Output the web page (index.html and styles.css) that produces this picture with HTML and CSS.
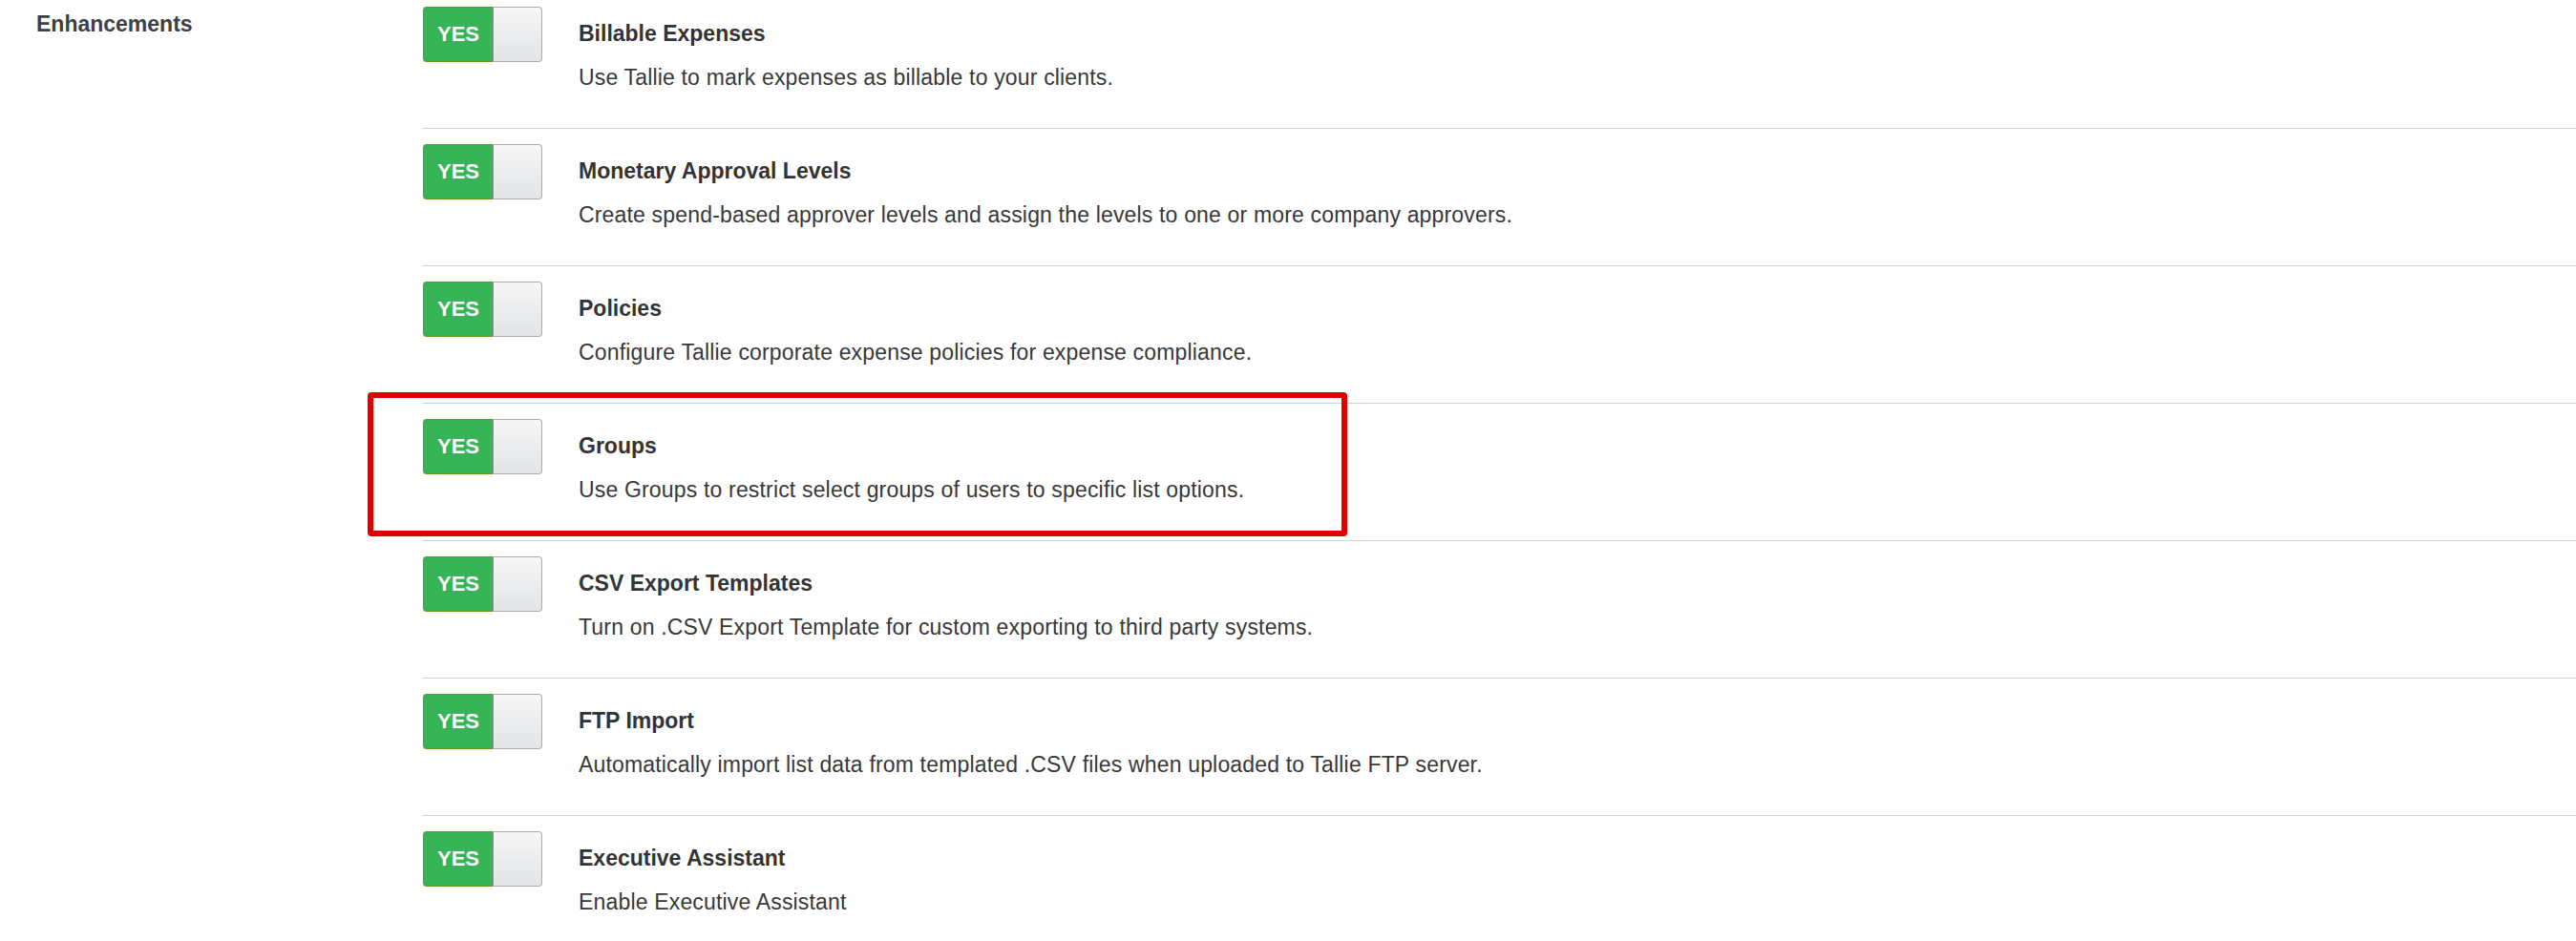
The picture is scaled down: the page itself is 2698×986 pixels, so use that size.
FILE: index.html
```html
<!DOCTYPE html>
<html lang="en">
<head>
  <meta charset="UTF-8" />
  <title>Company Settings - Enhancements</title>
  <link rel="stylesheet" href="styles.css">
</head>
<body>
  <div class="settings">
    <div class="settings-label">Enhancements</div>
    <div class="features">
      <div class="feature">
        <span class="switch"><span class="switch-on">YES</span><span class="switch-knob"></span></span>
        <div class="feature-text">
          <div class="feature-title">Billable Expenses</div>
          <div class="feature-desc">Use Tallie to mark expenses as billable to your clients.</div>
        </div>
      </div>
      <div class="feature">
        <span class="switch"><span class="switch-on">YES</span><span class="switch-knob"></span></span>
        <div class="feature-text">
          <div class="feature-title">Monetary Approval Levels</div>
          <div class="feature-desc">Create spend-based approver levels and assign the levels to one or more company approvers.</div>
        </div>
      </div>
      <div class="feature">
        <span class="switch"><span class="switch-on">YES</span><span class="switch-knob"></span></span>
        <div class="feature-text">
          <div class="feature-title">Policies</div>
          <div class="feature-desc">Configure Tallie corporate expense policies for expense compliance.</div>
        </div>
      </div>
      <div class="feature highlight">
        <span class="switch"><span class="switch-on">YES</span><span class="switch-knob"></span></span>
        <div class="feature-text">
          <div class="feature-title">Groups</div>
          <div class="feature-desc">Use Groups to restrict select groups of users to specific list options.</div>
        </div>
      </div>
      <div class="feature">
        <span class="switch"><span class="switch-on">YES</span><span class="switch-knob"></span></span>
        <div class="feature-text">
          <div class="feature-title">CSV Export Templates</div>
          <div class="feature-desc">Turn on .CSV Export Template for custom exporting to third party systems.</div>
        </div>
      </div>
      <div class="feature">
        <span class="switch"><span class="switch-on">YES</span><span class="switch-knob"></span></span>
        <div class="feature-text">
          <div class="feature-title">FTP Import</div>
          <div class="feature-desc">Automatically import list data from templated .CSV files when uploaded to Tallie FTP server.</div>
        </div>
      </div>
      <div class="feature">
        <span class="switch"><span class="switch-on">YES</span><span class="switch-knob"></span></span>
        <div class="feature-text">
          <div class="feature-title">Executive Assistant</div>
          <div class="feature-desc">Enable Executive Assistant</div>
        </div>
      </div>
    </div>
  </div>
</body>
</html>
```

FILE: styles.css
```css
body {
  font-family: 'Liberation Sans', Arial, sans-serif;
  background-color: #fff;
  color: #333;
  margin: 0;
}
.settings {
  display: grid;
  grid-template-columns: 443px 1fr;
}
.settings-label {
  padding: 9px 0 0 38px;
  font-size: 23px;
  line-height: 32px;
  font-weight: bold;
  color: #404040;
}
.feature {
  display: flex;
  gap: 38px;
  padding: 16px 0 37px;
  border-top: 1px solid #d2d2d2;
}
.feature:first-child {
  padding-top: 7px;
  border-top: none;
}
.highlight {
  position: relative;
}
.highlight::after {
  content: '';
  position: absolute;
  left: -58px;
  top: -12px;
  width: 1026px;
  height: 151px;
  box-sizing: border-box;
  border: 6px solid #e00000;
  border-radius: 4px;
}
.switch {
  display: flex;
  flex: none;
  width: 125px;
  height: 58px;
}
.switch-on {
  width: 73px;
  box-sizing: border-box;
  display: flex;
  align-items: center;
  justify-content: center;
  background: #36b457;
  border: 1px solid #5e9a22;
  border-right: none;
  border-radius: 4px 0 0 4px;
  color: #fff;
  font-size: 22px;
  font-weight: bold;
}
.switch-knob {
  flex: 1;
  background: linear-gradient(#f6f6f6, #e2e4e6);
  border: 1px solid #a8abaf;
  border-left-color: #8f9396;
  border-radius: 0 4px 4px 0;
}
.feature-text {
  padding-top: 12px;
  font-size: 23px;
  line-height: 32px;
}
.feature-title {
  font-weight: bold;
  color: #333;
}
.feature-desc {
  margin-top: 14px;
  color: #383838;
  letter-spacing: 0.17px;
}
```
